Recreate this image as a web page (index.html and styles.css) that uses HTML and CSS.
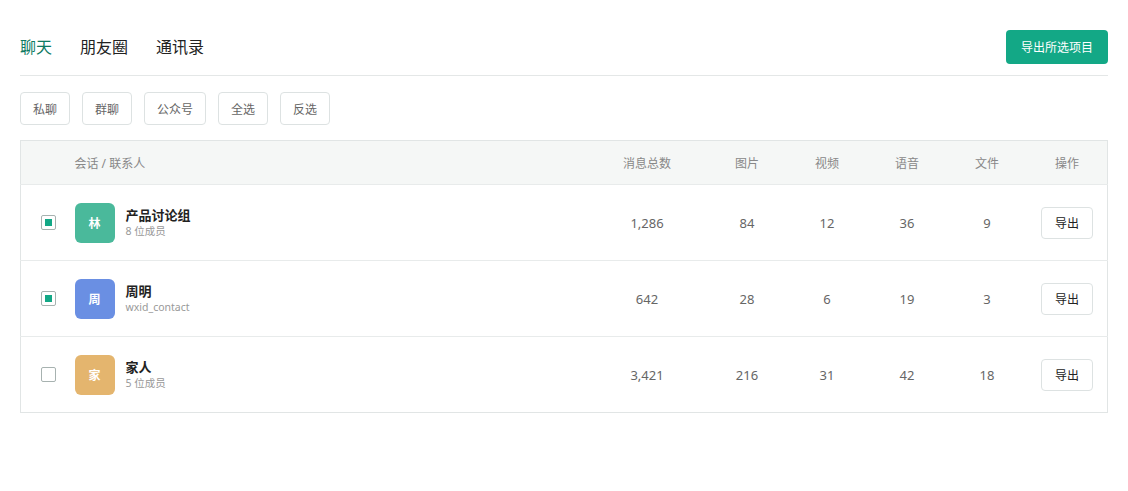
FILE: index.html
```html
<!DOCTYPE html>
<html lang="zh-CN">
<head>
    <meta charset="UTF-8">
    <title>导出聊天记录</title>
    <link rel="stylesheet" href="styles.css">
</head>
<body>
    <div class="page">
        <div class="topbar">
            <div class="tabs">
                <span class="tab active">聊天</span>
                <span class="tab">朋友圈</span>
                <span class="tab">通讯录</span>
            </div>
            <button class="primary-btn">导出所选项目</button>
        </div>

        <div class="filters">
            <button class="filter-btn">私聊</button>
            <button class="filter-btn">群聊</button>
            <button class="filter-btn">公众号</button>
            <button class="filter-btn">全选</button>
            <button class="filter-btn">反选</button>
        </div>

        <table class="chat-table">
            <thead>
                <tr>
                    <th class="col-check"></th>
                    <th class="col-name">会话 / 联系人</th>
                    <th class="col-total">消息总数</th>
                    <th class="col-num">图片</th>
                    <th class="col-num">视频</th>
                    <th class="col-num">语音</th>
                    <th class="col-num">文件</th>
                    <th class="col-num">操作</th>
                </tr>
            </thead>
            <tbody>
                <tr>
                    <td class="col-check"><span class="check checked"></span></td>
                    <td class="col-name">
                        <div class="contact">
                            <div class="avatar green">林</div>
                            <div>
                                <div class="contact-name">产品讨论组</div>
                                <div class="contact-sub">8 位成员</div>
                            </div>
                        </div>
                    </td>
                    <td>1,286</td>
                    <td>84</td>
                    <td>12</td>
                    <td>36</td>
                    <td>9</td>
                    <td><button class="export-btn">导出</button></td>
                </tr>
                <tr>
                    <td class="col-check"><span class="check checked"></span></td>
                    <td class="col-name">
                        <div class="contact">
                            <div class="avatar blue">周</div>
                            <div>
                                <div class="contact-name">周明</div>
                                <div class="contact-sub">wxid_contact</div>
                            </div>
                        </div>
                    </td>
                    <td>642</td>
                    <td>28</td>
                    <td>6</td>
                    <td>19</td>
                    <td>3</td>
                    <td><button class="export-btn">导出</button></td>
                </tr>
                <tr>
                    <td class="col-check"><span class="check"></span></td>
                    <td class="col-name">
                        <div class="contact">
                            <div class="avatar orange">家</div>
                            <div>
                                <div class="contact-name">家人</div>
                                <div class="contact-sub">5 位成员</div>
                            </div>
                        </div>
                    </td>
                    <td>3,421</td>
                    <td>216</td>
                    <td>31</td>
                    <td>42</td>
                    <td>18</td>
                    <td><button class="export-btn">导出</button></td>
                </tr>
            </tbody>
        </table>
    </div>
</body>
</html>
```

FILE: styles.css
```css
body {
    margin: 0;
    background-color: #fff;
    font-family: "Noto Sans", "Noto Sans CJK SC", sans-serif;
    color: #333;
}

.page {
    padding: 30px 20px 20px;
}

/* Top bar with tabs */
.topbar {
    display: flex;
    justify-content: space-between;
    align-items: center;
    height: 34px;
    padding-bottom: 11px;
    border-bottom: 1px solid #e4e7e7;
}

.tabs {
    display: flex;
    gap: 28px;
}

.tab {
    font-size: 16px;
    color: #222;
    line-height: 22px;
}

.tab.active {
    color: #0e7a62;
}

.primary-btn {
    height: 34px;
    width: 102px;
    border: none;
    border-radius: 4px;
    background-color: #13a886;
    color: #fff;
    font-family: inherit;
    font-size: 12px;
    cursor: pointer;
}

/* Filter buttons */
.filters {
    display: flex;
    gap: 12px;
    margin-top: 16px;
}

.filter-btn {
    height: 33px;
    padding: 0 12px;
    min-width: 50px;
    border: 1px solid #dde2e2;
    border-radius: 4px;
    background-color: #fff;
    color: #666;
    font-family: inherit;
    font-size: 12px;
}

/* Table */
.chat-table {
    width: 1088px;
    margin-top: 15px;
    border-collapse: collapse;
    border: 1px solid #e1e5e5;
    font-size: 13px;
}

.chat-table th {
    height: 43px;
    background-color: #f5f7f6;
    color: #888;
    font-weight: normal;
    font-size: 12px;
    text-align: center;
    padding: 0;
}

.chat-table td {
    height: 75px;
    padding: 0;
    text-align: center;
    color: #666;
    border-top: 1px solid #e8ebeb;
}

.chat-table .col-check {
    width: 54px;
    text-align: left;
    padding-left: 20px;
    box-sizing: border-box;
}

.chat-table .col-name {
    text-align: left;
}

.col-total {
    width: 120px;
}

.col-num {
    width: 80px;
}

.check {
    display: flex;
    align-items: center;
    justify-content: center;
    width: 13px;
    height: 13px;
    border: 1px solid #a7b2b0;
    border-radius: 2px;
    background-color: #fff;
}

.check.checked::after {
    content: "";
    width: 7px;
    height: 7px;
    background-color: #13a886;
}

.contact {
    display: flex;
    align-items: center;
    gap: 11px;
}

.avatar {
    width: 40px;
    height: 40px;
    border-radius: 6px;
    display: flex;
    align-items: center;
    justify-content: center;
    color: #fff;
    font-size: 12px;
    font-weight: bold;
}

.avatar.green { background-color: #4ab99b; }
.avatar.blue { background-color: #6a8fe3; }
.avatar.orange { background-color: #e4b56e; }

.contact-name {
    font-size: 13px;
    font-weight: bold;
    color: #222;
    line-height: 18px;
}

.contact-sub {
    font-size: 10.5px;
    color: #999;
    line-height: 15px;
}

.export-btn {
    width: 52px;
    height: 32px;
    border: 1px solid #dde2e2;
    border-radius: 4px;
    background-color: #fff;
    color: #222;
    font-family: inherit;
    font-size: 12px;
}
```
